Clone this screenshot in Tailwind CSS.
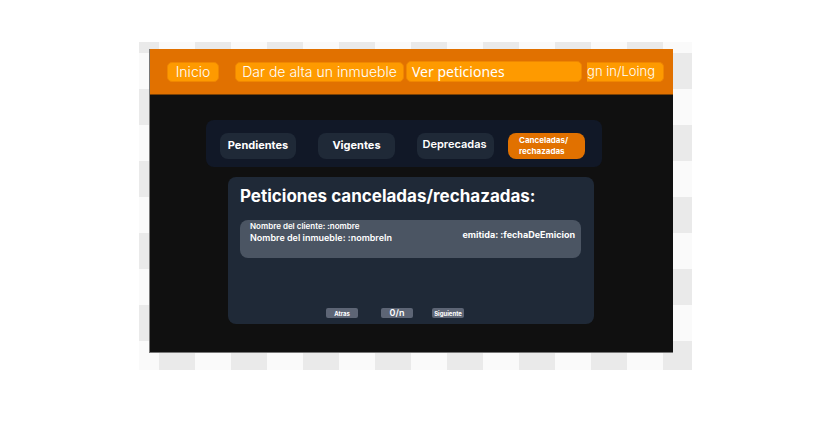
<!DOCTYPE html>
<html lang="es">
<head>
<meta charset="utf-8">
<title>Peticiones</title>
<script src="https://cdn.jsdelivr.net/npm/@tailwindcss/browser@4"></script>
</head>
<body class="bg-white pt-[42px] pr-[131px] pl-[139px] font-['Inter',sans-serif] text-white">
<div class="bg-[repeating-conic-gradient(#fafafa_0_25%,#eaeaea_0_50%)] bg-[length:72px_72px] bg-[position:-16px_-25px] pt-[7px] pr-[19px] pb-[17px] pl-[10px]">
  <div class="border-b border-l border-[#777777] bg-[#101010] pb-7">
    <header class="border-b border-[#7c4205] bg-[#e17100]">
      <nav class="flex h-[45px] items-center pr-[9px] pl-[17px] text-sm font-light whitespace-nowrap">
        <a href="#" class="flex h-5 w-[52px] items-center justify-center rounded-[5px] border border-[#f08700] bg-[#fe9a00]">Inicio</a>
        <a href="#" class="ml-4 flex h-5 w-[169px] items-center justify-center rounded-[5px] border border-[#f08700] bg-[#fe9a00]">Dar de alta un inmueble</a>
        <a href="#" class="ml-0.5 flex h-[21px] min-w-0 flex-1 items-center rounded-[5px] border border-[#f08700] bg-[#fe9a00] pl-[5px] font-['Noto_Sans',sans-serif] font-normal">Ver peticiones</a>
        <a href="#" class="ml-[5px] flex h-5 w-[77px] items-center justify-end rounded-r-[5px] border-y border-r border-[#f08700] bg-[#fe9a00] pr-2 text-[13px]">gn in/Loing</a>
      </nav>
    </header>
    <div class="mt-[25px] mr-[71px] ml-14 flex h-[47px] items-center gap-[22px] rounded-lg bg-[#111827] pt-1 pl-3.5 text-[11px] font-bold">
      <button type="button" class="h-[26px] w-[76px] rounded-lg bg-[#1f2937]">Pendientes</button>
      <button type="button" class="h-[26px] w-[77px] rounded-lg bg-[#1f2937]">Vigentes</button>
      <button type="button" class="h-[26px] w-[77px] rounded-lg bg-[#1f2937] pr-0.5 pb-0.5 font-semibold">Deprecadas</button>
      <button type="button" class="-ml-2 h-[26px] w-[77px] rounded-lg bg-[#e17100] pl-[11px] text-left text-[8px] leading-[11px]">Canceladas/<br>rechazadas</button>
    </div>
    <main class="mt-2.5 mr-[79px] ml-[78px] rounded-lg bg-[#1f2937] pt-[5px] pr-[13px] pb-[5px] pl-3 font-semibold">
      <h1 class="text-[17px] leading-7 font-bold whitespace-nowrap">Peticiones canceladas/rechazadas:</h1>
      <article class="mt-2.5 flex h-[38px] justify-between rounded-lg bg-[#4b5563] pr-[6px] pl-[10px] whitespace-nowrap">
        <div>
          <p class="text-[8px] leading-3">Nombre del cliente: :nombre</p>
          <p class="text-[9px] leading-3">Nombre del inmueble: :nombreIn</p>
        </div>
        <p class="pt-[9px] text-[9px] leading-3 font-bold">emitida: :fechaDeEmicion</p>
      </article>
      <div class="mt-[50px] mb-px flex h-[10px] pl-[86px]">
        <button type="button" class="flex w-8 items-center justify-center rounded-xs bg-[#5d6575] text-[6px] font-bold">Atras</button>
        <span class="ml-[23px] flex w-8 items-center justify-center rounded-xs bg-[#5d6575] text-[9px]">0/n</span>
        <button type="button" class="ml-[19px] flex w-8 items-center justify-center rounded-xs bg-[#5d6575] text-[6px] font-bold">Siguiente</button>
      </div>
    </main>
  </div>
</div>
</body>
</html>
